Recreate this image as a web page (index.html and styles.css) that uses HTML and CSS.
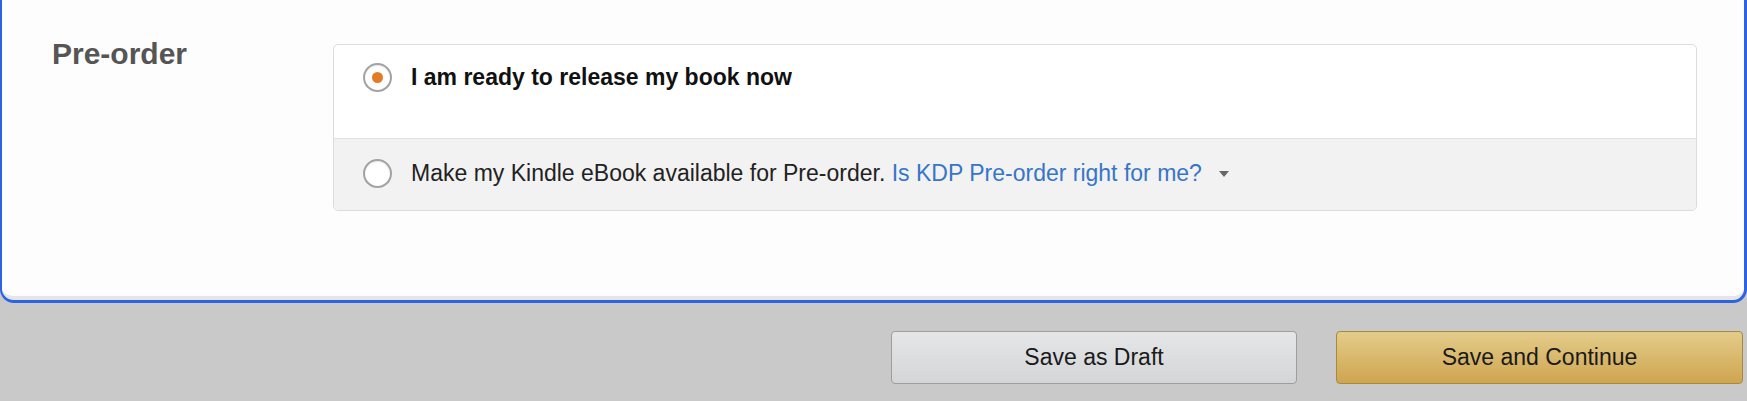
FILE: index.html
```html
<!DOCTYPE html>
<html lang="en">
<head>
<meta charset="utf-8">
<title>Pre-order</title>
<link rel="stylesheet" href="styles.css">
</head>
<body>
<div class="card">
  <div class="label">Pre-order</div>
  <div class="options">
    <div class="option option-first">
      <span class="radio radio-checked"><span class="dot"></span></span>
      <span class="option-text strong">I am ready to release my book now</span>
    </div>
    <div class="option option-second">
      <span class="radio"></span>
      <span class="option-text">Make my Kindle eBook available for Pre-order. <a class="link" href="#">Is KDP Pre-order right for me?</a><span class="caret"></span></span>
    </div>
  </div>
</div>
<div class="footer">
  <button class="btn btn-draft" type="button">Save as Draft</button>
  <button class="btn btn-continue" type="button">Save and Continue</button>
</div>
</body>
</html>
```

FILE: styles.css
```css
html, body {
  margin: 0;
  padding: 0;
}
body {
  width: 1747px;
  height: 401px;
  overflow: hidden;
  background: #c9c9c9;
  font-family: "Liberation Sans", Arial, Helvetica, sans-serif;
  color: #222;
}
.card {
  box-sizing: border-box;
  margin-top: -14px;
  height: 317px;
  border: 3px solid #2c62e4;
  border-left-width: 2px;
  border-radius: 14px;
  background: #fdfdfd;
  display: flex;
  align-items: flex-start;
  padding: 55px 47px 0 50px;
  box-shadow: inset 0 -6px 0 -2px #e6e6e6;
}
.label {
  flex: 0 0 281px;
  margin-top: -7px;
  font-size: 30px;
  line-height: 34px;
  font-weight: bold;
  color: #555;
}
.options {
  flex: 1;
  border: 1px solid #dcdcdc;
  border-radius: 5px;
  overflow: hidden;
  background: #fff;
}
.option {
  display: flex;
  align-items: center;
  gap: 19px;
  padding-left: 29px;
  box-sizing: border-box;
}
.option-first {
  height: 94px;
  align-items: flex-start;
  padding-top: 18px;
  border-bottom: 1px solid #e2e2e2;
}
.option-second {
  height: 71px;
  background: #f2f2f2;
  padding-bottom: 3px;
}
.radio {
  box-sizing: border-box;
  flex: 0 0 29px;
  width: 29px;
  height: 29px;
  border: 2px solid #a3a3a3;
  border-radius: 50%;
  background: #fff;
  display: flex;
  align-items: center;
  justify-content: center;
  box-shadow: inset 0 1px 2px rgba(0, 0, 0, 0.08);
}
.dot {
  width: 11px;
  height: 11px;
  border-radius: 50%;
  background: #e07b26;
}
.option-text {
  font-size: 23px;
  line-height: 29px;
  color: #222;
  white-space: nowrap;
}
.strong {
  font-weight: bold;
  color: #111;
}
.link {
  color: #3776c7;
  text-decoration: none;
}
.caret {
  display: inline-block;
  width: 0;
  height: 0;
  margin-left: 17px;
  vertical-align: 4px;
  border-left: 5px solid transparent;
  border-right: 5px solid transparent;
  border-top: 6px solid #666;
}
.footer {
  display: flex;
  justify-content: flex-end;
  gap: 39px;
  padding: 28px 4px 0 0;
}
.btn {
  box-sizing: border-box;
  height: 53px;
  border-radius: 4px;
  font-family: "Liberation Sans", Arial, Helvetica, sans-serif;
  font-size: 23px;
  color: #1a1a1a;
  padding: 0;
  cursor: pointer;
}
.btn-draft {
  width: 406px;
  border: 1px solid #9e9e9e;
  background: linear-gradient(#e5e6e8, #d4d5d7);
}
.btn-continue {
  width: 407px;
  border: 1px solid #a78a3c;
  background: linear-gradient(#e3cc8a, #cfa550);
}
```
